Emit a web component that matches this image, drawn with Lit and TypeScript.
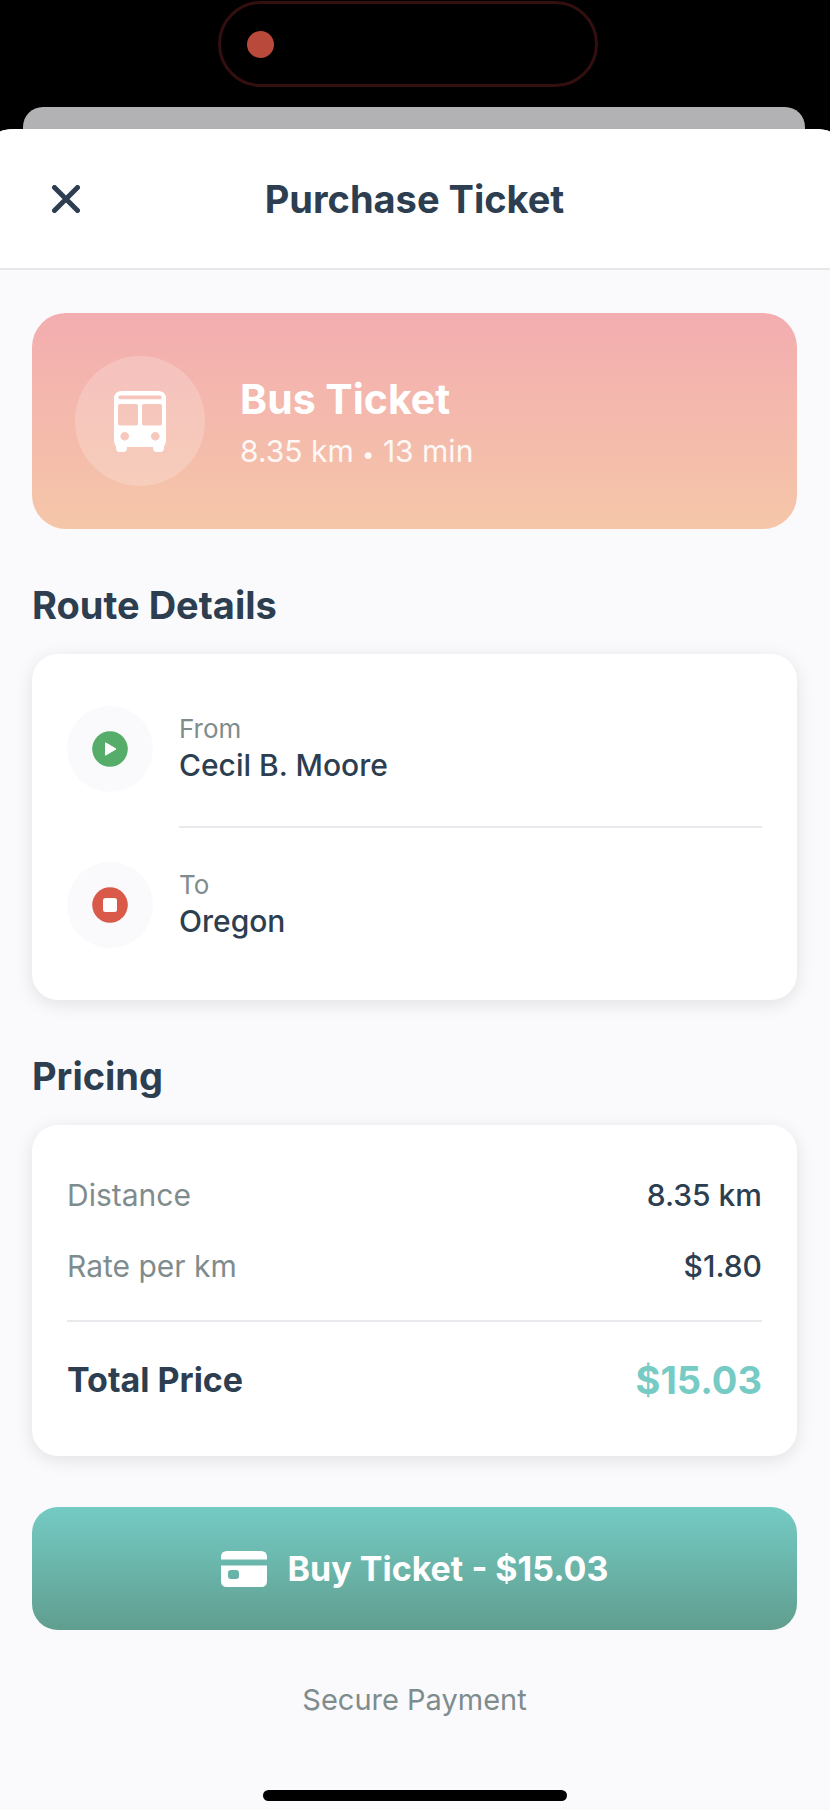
import { LitElement, html, css, svg } from "lit";
import { customElement, property } from "lit/decorators.js";

const busIcon = svg`
  <path fill="currentColor" fill-rule="evenodd" d="M8 0H44Q52 0 52 8V50Q52 53 50 55V57Q50 61 46 61H43Q39 61 39 57V56H13V57Q13 61 9 61H6Q2 61 2 57V55Q0 53 0 50V8Q0 0 8 0ZM6 4.500Q4.300 4.500 4.300 6.300Q4.300 8.200 6 8.200H46Q47.700 8.200 47.700 6.300Q47.700 4.500 46 4.500ZM6 13Q4 13 4 15V32.500Q4 34.500 6 34.500H22.500Q24 34.500 24 32.500V15Q24 13 22.500 13ZM29.500 13Q28 13 28 15V32.500Q28 34.500 29.500 34.500H46Q48 34.500 48 32.500V15Q48 13 46 13ZM10.700 41A4.300 4.300 0 1 0 10.700 49.600A4.300 4.300 0 1 0 10.700 41ZM41.300 41A4.300 4.300 0 1 0 41.300 49.600A4.300 4.300 0 1 0 41.300 41Z"/>`;

@customElement("route-stop")
export class RouteStop extends LitElement {
  @property() kind: "start" | "end" = "start";
  @property() label = "";
  @property() place = "";

  static styles = css`
    :host { display: flex; align-items: center; gap: 26px; }
    .badge {
      flex: none; width: 86px; height: 86px; border-radius: 50%;
      display: grid; place-items: center; background: #fafafc;
    }
    .icon { width: 36px; height: 36px; display: block; }
    .text { display: flex; flex-direction: column; min-width: 0; }
    .label { font-size: 26px; line-height: 32px; color: #7f8c8d; }
    .place { font-size: 30px; line-height: 40px; font-weight: 500; color: #2c3e50; }
  `;

  render() {
    const start = this.kind === "start";
    return html`
      <span class="badge">
        <svg class="icon" viewBox="0 0 36 36" aria-hidden="true">
          <circle cx="18" cy="18" r="17.800" fill=${start ? "#55ad69" : "#d95a49"} />
          ${start
            ? svg`<path d="M13.500 11.800V24.200L24 18Z" fill="#fff" stroke="#fff" stroke-width="1" stroke-linejoin="round"/>`
            : svg`<rect x="11" y="11" width="14" height="14" rx="2.500" fill="#fff"/>`}
        </svg>
      </span>
      <span class="text">
        <span class="label">${this.label}</span>
        <span class="place">${this.place}</span>
      </span>
    `;
  }
}

@customElement("app-root")
export class AppRoot extends LitElement {
  private rows = [
    { label: "Distance", value: "8.35 km" },
    { label: "Rate per km", value: "$1.80" },
  ];

  static styles = css`
    :host {
      display: flex; flex-direction: column; min-height: 100vh;
      background: #000; color: #2c3e50;
      font-family: Inter, "Liberation Sans", sans-serif;
    }
    *, *::before, *::after { box-sizing: border-box; }
    h1, h2, p, dl, dd, dt { margin: 0; }
    .status { display: flex; justify-content: center; padding: 1px 14px 20px 0; }
    .island {
      width: 380px; height: 86px; border: 3px solid #330f0f; border-radius: 43px;
      display: flex; align-items: center; padding-left: 26px;
    }
    .dot { width: 27px; height: 27px; border-radius: 50%; background: #b94a3b; }
    .behind { height: 22px; margin: 0 25px 0 23px; background: #b2b2b4; border-radius: 20px 20px 0 0; }
    .sheet {
      flex: 1; display: flex; flex-direction: column;
      background: #fafafc; border-radius: 16px 16px 0 0 / 3px 3px 0 0; overflow: hidden;
    }
    .bar {
      display: grid; grid-template-columns: 60px 1fr 60px; align-items: center;
      height: 141px; padding: 0 37px 0 36px; background: #fff; border-bottom: 2px solid #e8e8ea;
    }
    .close {
      width: 60px; height: 60px; padding: 0; border: 0; background: none; color: inherit;
      display: grid; place-items: center; cursor: pointer;
    }
    .close svg { width: 28px; height: 28px; display: block; }
    .title { font-size: 38px; line-height: 48px; font-weight: 700; text-align: center; }
    .content { flex: 1; display: flex; flex-direction: column; padding: 43px 33px 9px 32px; }
    .hero {
      display: flex; align-items: center; gap: 35px; padding: 43px; border-radius: 34px;
      background: linear-gradient(#f3adb0, #f5c6a8); color: #fff;
    }
    .disc {
      flex: none; width: 130px; height: 130px; border-radius: 50%;
      display: grid; place-items: center; background: rgba(255, 255, 255, 0.2);
    }
    .disc svg { width: 52px; height: 61px; display: block; }
    .hero-text { display: flex; flex-direction: column; gap: 14px; padding-top: 4px; }
    .hero-title { font-size: 41px; line-height: 44px; font-weight: 700; }
    .hero-sub { font-size: 30px; line-height: 32px; opacity: 0.9; }
    .sep { font-size: 22px; }
    .heading { font-size: 38px; line-height: 48px; font-weight: 700; margin: 52px 0 25px; }
    .card {
      background: #fff; border-radius: 26px; padding: 52px 35px;
      box-shadow: 0 4px 18px rgba(0, 0, 0, 0.1);
    }
    .pricing { padding: 50px 35px 52px; }
    .rule { border: 0; height: 2px; margin: 34px 0; background: #ebe9ed; }
    .rule.inset { margin-left: 112px; }
    .prices { display: flex; flex-direction: column; }
    .row { display: flex; justify-content: space-between; align-items: center; font-size: 30px; line-height: 40px; }
    .row + .row { margin-top: 31px; }
    .row dt { color: #7f8c8d; }
    .row dd { font-weight: 500; }
    .total { line-height: 48px; }
    .total dt { font-size: 34px; font-weight: 700; color: #2c3e50; }
    .total dd { font-size: 38px; font-weight: 700; color: #76cbc4; }
    .buy {
      display: flex; align-items: center; justify-content: center; gap: 21px;
      width: 100%; height: 123px; margin-top: 51px; padding: 0; border: 0; border-radius: 26px;
      background: linear-gradient(#74cbc4, #609e8f); color: #fff; cursor: pointer;
      font: 700 34px/48px Inter, "Liberation Sans", sans-serif;
    }
    .buy svg { width: 46px; height: 36px; display: block; }
    .secure { margin-top: 50px; text-align: center; font-size: 29px; line-height: 40px; color: #7f8c8d; }
    .home { width: 304px; height: 11px; margin: auto auto 0; border-radius: 6px; background: #000; }
  `;

  render() {
    return html`
      <div class="status"><div class="island"><span class="dot"></span></div></div>
      <div class="behind"></div>
      <main class="sheet">
        <header class="bar">
          <button class="close" aria-label="Close">
            <svg viewBox="0 0 28 28" aria-hidden="true">
              <path d="M2.500 2.500L25.500 25.500M25.500 2.500L2.500 25.500" stroke="currentColor" stroke-width="5" stroke-linecap="round"/>
            </svg>
          </button>
          <h1 class="title">Purchase Ticket</h1>
        </header>
        <div class="content">
          <section class="hero">
            <span class="disc"><svg viewBox="0 0 52 61" aria-hidden="true">${busIcon}</svg></span>
            <div class="hero-text">
              <h2 class="hero-title">Bus Ticket</h2>
              <p class="hero-sub">8.35 km <span class="sep">•</span> 13 min</p>
            </div>
          </section>

          <h2 class="heading">Route Details</h2>
          <section class="card">
            <route-stop kind="start" label="From" place="Cecil B. Moore"></route-stop>
            <hr class="rule inset" />
            <route-stop kind="end" label="To" place="Oregon"></route-stop>
          </section>

          <h2 class="heading">Pricing</h2>
          <section class="card pricing">
            <dl class="prices">
              ${this.rows.map((r) => html`<div class="row"><dt>${r.label}</dt><dd>${r.value}</dd></div>`)}
            </dl>
            <hr class="rule" />
            <dl class="prices">
              <div class="row total"><dt>Total Price</dt><dd>$15.03</dd></div>
            </dl>
          </section>

          <button class="buy">
            <svg viewBox="0 0 46 36" aria-hidden="true">
              <path fill="currentColor" fill-rule="evenodd" d="M6 0H40Q46 0 46 6V8.500H0V6Q0 0 6 0ZM0 14.500H46V30Q46 36 40 36H6Q0 36 0 30ZM10 19Q7 19 7 22V25Q7 28 10 28H15Q18 28 18 25V22Q18 19 15 19Z"/>
            </svg>
            <span>Buy Ticket - $15.03</span>
          </button>
          <p class="secure">Secure Payment</p>
          <div class="home"></div>
        </div>
      </main>
    `;
  }
}
